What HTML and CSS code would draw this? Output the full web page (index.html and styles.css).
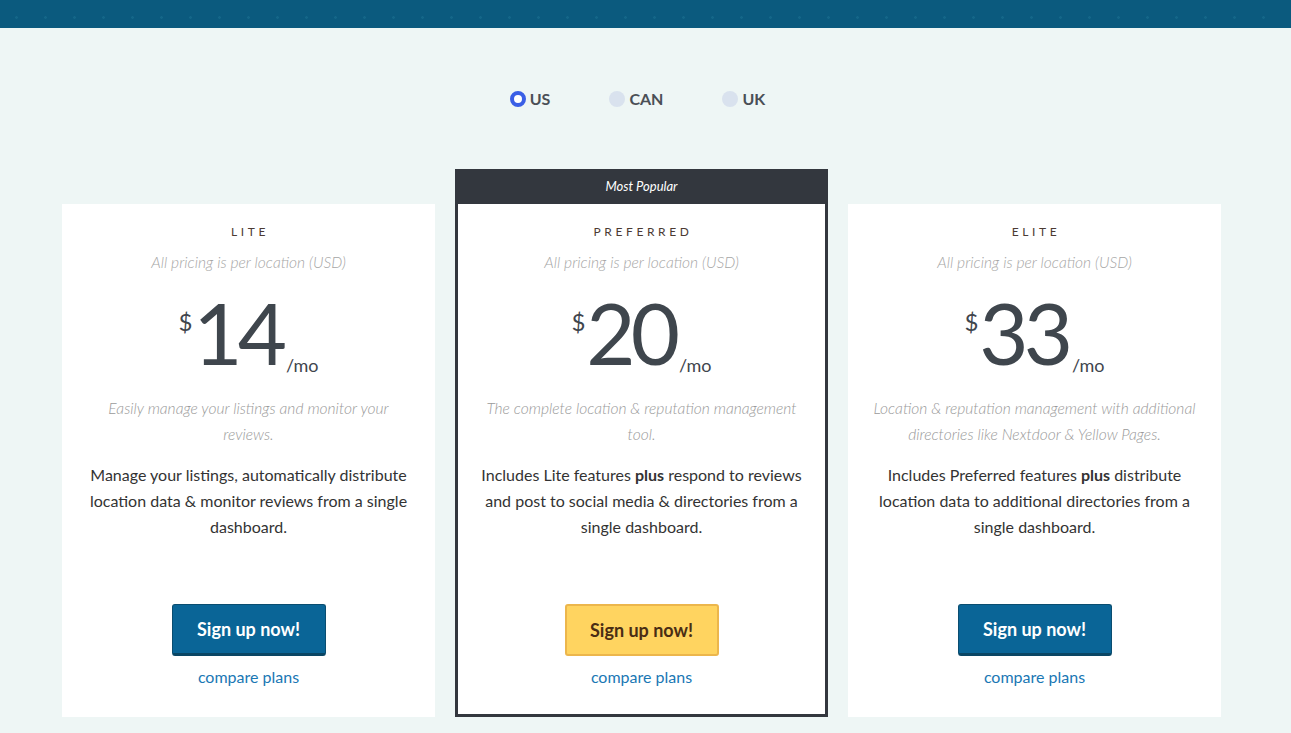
FILE: index.html
```html
<!DOCTYPE html>
<html lang="en">
<head>
<meta charset="utf-8">
<title>Pricing</title>
<link rel="stylesheet" href="styles.css">
</head>
<body>
<header class="topbar"></header>
<main class="page">
  <div class="regions">
    <label class="region"><span class="radio radio-on"></span>US</label>
    <label class="region"><span class="radio"></span>CAN</label>
    <label class="region"><span class="radio"></span>UK</label>
  </div>
  <div class="plans">
    <section class="plan">
      <div class="plan-body">
        <h2 class="plan-name">LITE</h2>
        <p class="plan-note">All pricing is per location (USD)</p>
        <div class="price"><span class="cur">$</span><span class="amt">14</span><span class="per">/mo</span></div>
        <p class="plan-desc">Easily manage your listings and monitor your reviews.</p>
        <p class="plan-text">Manage your listings, automatically distribute location data &amp; monitor reviews from a single dashboard.</p>
        <a class="btn btn-blue" href="#">Sign up now!</a>
        <a class="compare" href="#">compare plans</a>
      </div>
    </section>
    <section class="plan plan-featured">
      <div class="ribbon">Most Popular</div>
      <div class="plan-body">
        <h2 class="plan-name">PREFERRED</h2>
        <p class="plan-note">All pricing is per location (USD)</p>
        <div class="price"><span class="cur">$</span><span class="amt">20</span><span class="per">/mo</span></div>
        <p class="plan-desc">The complete location &amp; reputation management tool.</p>
        <p class="plan-text">Includes Lite features <b>plus</b> respond to reviews and post to social media &amp; directories from a single dashboard.</p>
        <a class="btn btn-yellow" href="#">Sign up now!</a>
        <a class="compare" href="#">compare plans</a>
      </div>
    </section>
    <section class="plan">
      <div class="plan-body">
        <h2 class="plan-name">ELITE</h2>
        <p class="plan-note">All pricing is per location (USD)</p>
        <div class="price"><span class="cur">$</span><span class="amt">33</span><span class="per">/mo</span></div>
        <p class="plan-desc">Location &amp; reputation management with additional directories like Nextdoor &amp; Yellow Pages.</p>
        <p class="plan-text">Includes Preferred features <b>plus</b> distribute location data to additional directories from a single dashboard.</p>
        <a class="btn btn-blue" href="#">Sign up now!</a>
        <a class="compare" href="#">compare plans</a>
      </div>
    </section>
  </div>
</main>
</body>
</html>
```

FILE: styles.css
```css
* { box-sizing: border-box; }
html, body { margin: 0; padding: 0; }
body {
  background: #eef6f5;
  font-family: Lato, "Open Sans", "Liberation Sans", sans-serif;
  color: #333;
  height: 733px;
  overflow: hidden;
}
.topbar {
  height: 28px;
  background-color: #0b5a7e;
  background-image: radial-gradient(circle, rgba(40,130,160,0.3) 1px, transparent 1.6px);
  background-size: 29px 29px;
  background-position: 2px 3px;
}
.page {
  margin-left: 62px;
  width: 1159px;
  padding-top: 61px;
}
.regions {
  display: flex;
  justify-content: center;
  gap: 59px;
  height: 20px;
  padding-right: 8px;
}
.region {
  display: flex;
  align-items: center;
  gap: 4px;
  font-weight: 700;
  font-size: 16px;
  color: #4a4f56;
  line-height: 20px;
}
.radio {
  width: 16px;
  height: 16px;
  border-radius: 50%;
  background: #d9e2ee;
}
.radio-on {
  background: #fff;
  border: 4px solid #3a5fe6;
}
.plans {
  display: flex;
  align-items: flex-end;
  gap: 20px;
  margin-top: 60px;
}
.plan {
  width: 373px;
  background: #fff;
}
.plan-featured {
  border: 3px solid #33373e;
  border-top: 0;
}
.ribbon {
  height: 35px;
  margin: 0 -3px;
  background: #33373e;
  color: #fff;
  font-style: italic;
  font-size: 13px;
  line-height: 35px;
  text-align: center;
}
.plan-body {
  height: 513px;
  display: flex;
  flex-direction: column;
  align-items: center;
  text-align: center;
  padding: 18px 20px 29px;
}
.plan-featured .plan-body {
  height: 510px;
  padding-bottom: 26px;
}
.plan-name {
  margin: 0;
  font-size: 12px;
  font-weight: 400;
  letter-spacing: 3.6px;
  line-height: 20px;
  color: #4b3a33;
  padding-left: 3px;
}
.plan-note {
  margin: 9px 0 0;
  font-size: 15.6px;
  font-style: italic;
  font-weight: 300;
  line-height: 22px;
  color: #a6a6a6;
}
.price {
  display: flex;
  align-items: baseline;
  justify-content: center;
  margin-top: 16px;
  height: 92px;
  color: #3f464d;
}
.cur {
  align-self: flex-start;
  font-size: 24px;
  line-height: 24px;
  margin-top: 21px;
  margin-right: 1px;
}
.amt {
  font-size: 85px;
  line-height: 86px;
  letter-spacing: -5px;
  margin-right: 4px;
}
.per {
  font-size: 18px;
  line-height: 18px;
  position: relative;
  top: 7px;
}
.plan-desc {
  margin: 14px 0 0;
  font-size: 15.6px;
  font-style: italic;
  font-weight: 300;
  line-height: 26px;
  color: #9a9a9a;
}
.plan-text {
  margin: 15px 0 0;
  font-size: 16px;
  line-height: 26px;
  color: #333;
}
.plan-text b { font-weight: 700; }
.btn {
  margin-top: auto;
  width: 154px;
  height: 52px;
  display: flex;
  align-items: center;
  justify-content: center;
  border-radius: 3px;
  font-size: 18px;
  font-weight: 700;
  text-decoration: none;
}
.btn-blue {
  background: #0a6597;
  color: #fff;
  border: 1px solid #0a4d70;
  border-bottom: 3px solid #0a4664;
}
.btn-yellow {
  background: #ffd460;
  color: #4a2d14;
  border: 2px solid #ecb64c;
}
.compare {
  margin-top: 10px;
  font-size: 16px;
  line-height: 22px;
  color: #1a77b4;
  text-decoration: none;
}
```
